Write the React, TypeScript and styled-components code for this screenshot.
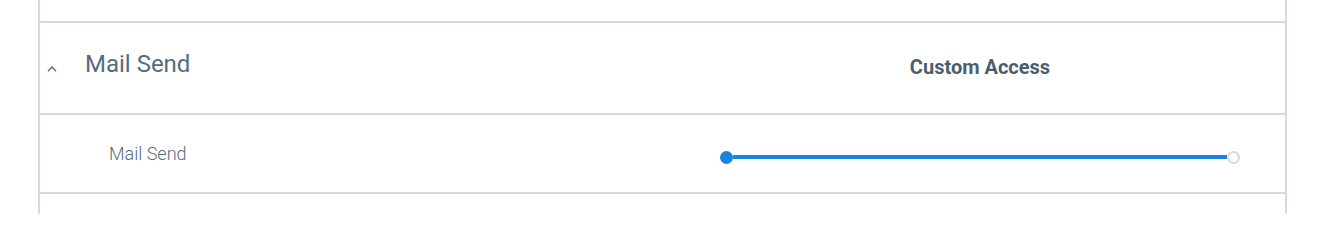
import React from "react";
import styled, { createGlobalStyle } from "styled-components";

const GlobalStyle = createGlobalStyle`
  html, body {
    margin: 0;
    padding: 0;
    background: #ffffff;
    font-family: Roboto, "Liberation Sans", sans-serif;
  }
`;

const Table = styled.div`
  box-sizing: border-box;
  width: 1249px;
  margin-left: 38px;
  border-left: 2px solid #d4dadf;
  border-right: 2px solid #d4dadf;
  display: flex;
  flex-direction: column;
`;

const Row = styled.div<{ $height: number }>`
  display: grid;
  grid-template-columns: 635px 1fr;
  height: ${(p) => p.$height}px;
  border-bottom: 2px solid #d4dadf;
  &:last-child {
    border-bottom: none;
  }
`;

const GroupCell = styled.div`
  display: flex;
  align-items: center;
  padding-left: 7px;
  gap: 28px;
`;

const Chevron = styled.svg`
  width: 10px;
  height: 6px;
  margin-top: 2px;
  color: #546b81;
  flex-shrink: 0;
`;

const GroupTitle = styled.span`
  font-size: 24px;
  font-weight: 400;
  line-height: 28px;
  color: #546b81;
  margin-bottom: 9px;
`;

const AccessCell = styled.div`
  display: flex;
  align-items: center;
  justify-content: center;
  padding-bottom: 2px;
`;

const AccessLabel = styled.span`
  font-size: 20px;
  font-weight: 700;
  line-height: 24px;
  color: #4c5d70;
`;

const ScopeCell = styled.div`
  display: flex;
  align-items: center;
  padding-left: 69px;
`;

const ScopeName = styled.span`
  font-size: 18px;
  font-weight: 300;
  line-height: 22px;
  color: #546b81;
`;

const SliderCell = styled.div`
  display: flex;
  align-items: center;
  padding: 7px 45px 0 45px;
`;

const Track = styled.div`
  flex: 1;
  display: flex;
  align-items: center;
`;

const Knob = styled.div<{ $active?: boolean }>`
  box-sizing: border-box;
  width: 13px;
  height: 13px;
  border-radius: 50%;
  flex-shrink: 0;
  background: ${(p) => (p.$active ? "#1a82e2" : "#ffffff")};
  border: 2px solid ${(p) => (p.$active ? "#1a82e2" : "#d4dadf")};
`;

const Line = styled.div`
  flex: 1;
  height: 4px;
  background: #1a82e2;
`;

export default function App() {
  return (
    <>
      <GlobalStyle />
      <Table>
        <Row $height={21} />
        <Row $height={90}>
          <GroupCell>
            <Chevron viewBox="0 0 10 6" fill="none">
              <polyline
                points="1,5.2 5,1 9,5.2"
                stroke="currentColor"
                strokeWidth="1.3"
              />
            </Chevron>
            <GroupTitle>Mail Send</GroupTitle>
          </GroupCell>
          <AccessCell>
            <AccessLabel>Custom Access</AccessLabel>
          </AccessCell>
        </Row>
        <Row $height={77}>
          <ScopeCell>
            <ScopeName>Mail Send</ScopeName>
          </ScopeCell>
          <SliderCell>
            <Track>
              <Knob $active />
              <Line />
              <Knob />
            </Track>
          </SliderCell>
        </Row>
        <Row $height={20} />
      </Table>
    </>
  );
}
